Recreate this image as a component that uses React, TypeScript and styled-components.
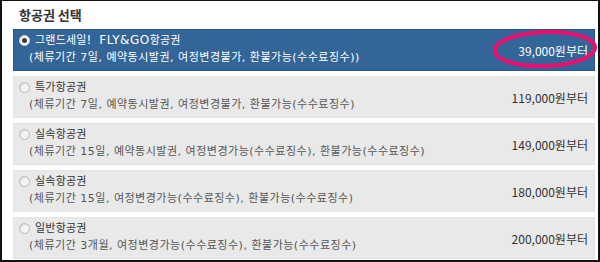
import styled, { createGlobalStyle } from 'styled-components';

const GlobalStyle = createGlobalStyle`
  html, body {
    margin: 0;
    padding: 0;
    background: #ffffff;
  }
  * {
    box-sizing: border-box;
  }
`;

type Ticket = {
  name: string;
  detail: string;
  price: string;
  selected?: boolean;
};

const tickets: Ticket[] = [
  {
    name: '그랜드세일! FLY&GO항공권',
    detail: '(체류기간 7일, 예약동시발권, 여정변경불가, 환불가능(수수료징수))',
    price: '39,000원부터',
    selected: true,
  },
  {
    name: '특가항공권',
    detail: '(체류기간 7일, 예약동시발권, 여정변경불가, 환불가능(수수료징수)',
    price: '119,000원부터',
  },
  {
    name: '실속항공권',
    detail: '(체류기간 15일, 예약동시발권, 여정변경가능(수수료징수), 환불가능(수수료징수)',
    price: '149,000원부터',
  },
  {
    name: '실속항공권',
    detail: '(체류기간 15일, 여정변경가능(수수료징수), 환불가능(수수료징수)',
    price: '180,000원부터',
  },
  {
    name: '일반항공권',
    detail: '(체류기간 3개월, 여정변경가능(수수료징수), 환불가능(수수료징수)',
    price: '200,000원부터',
  },
];

const Frame = styled.div`
  width: 600px;
  height: 262px;
  border: 2px solid #111111;
  border-top-width: 1px;
  padding: 0 3px 0 11px;
  overflow: hidden;
  font-family: 'DejaVu Sans', 'Noto Sans CJK KR', sans-serif;
  font-size: 11px;
  color: #333333;
`;

const Heading = styled.h2`
  margin: 0;
  height: 28px;
  line-height: 28px;
  padding-left: 6px;
  font-family: 'Noto Sans CJK KR', sans-serif;
  font-size: 13px;
  font-weight: 700;
  color: #333333;
`;

const List = styled.ul`
  margin: 0;
  padding: 0;
  list-style: none;
  display: flex;
  flex-direction: column;
  gap: 5px;
`;

const Row = styled.li<{ $selected?: boolean }>`
  position: relative;
  height: 42px;
  display: flex;
  align-items: flex-start;
  justify-content: space-between;
  padding: 2px 6px 0 5px;
  border: 1px solid ${(p) => (p.$selected ? '#28568a' : '#e4e4e4')};
  background: ${(p) => (p.$selected ? '#336598' : '#e9e9e9')};
  color: ${(p) => (p.$selected ? '#ffffff' : '#333333')};
`;

const Info = styled.div`
  display: flex;
  flex-direction: column;
  line-height: 17px;
`;

const NameLine = styled.div`
  display: flex;
  align-items: center;
  gap: 5px;
`;

const Radio = styled.span<{ $checked?: boolean }>`
  width: 11px;
  height: 11px;
  border-radius: 50%;
  border: 1px solid ${(p) => (p.$checked ? '#d0d0d0' : '#b9b9b9')};
  background: ${(p) => (p.$checked ? '#ffffff' : '#f4f4f4')};
  box-shadow: inset 1px 1px 1px ${(p) => (p.$checked ? '#e6e6e6' : '#dcdcdc')};
  display: flex;
  align-items: center;
  justify-content: center;
  flex-shrink: 0;
  &::after {
    content: '';
    width: 5px;
    height: 5px;
    border-radius: 50%;
    background: ${(p) => (p.$checked ? '#3a3a3a' : 'transparent')};
  }
`;

const Name = styled.span`
  font-size: 11px;
  letter-spacing: 0.2px;
`;

const Latin = styled.span`
  font-size: 12px;
  letter-spacing: 0.5px;
  word-spacing: 3px;
`;

const Detail = styled.div<{ $selected?: boolean }>`
  padding-left: 10px;
  font-size: 11px;
  letter-spacing: 0.5px;
  color: ${(p) => (p.$selected ? '#ffffff' : '#555555')};
  white-space: nowrap;
`;

const Price = styled.div`
  padding-top: 10px;
  font-family: 'Noto Sans CJK KR', sans-serif;
  font-size: 12px;
  white-space: nowrap;
`;

const Highlight = styled.svg`
  position: absolute;
  top: 0;
  right: -4px;
  width: 106px;
  height: 38px;
  pointer-events: none;
`;

// wider latin run inside a name, the way the source font draws it
function renderName(name: string) {
  return name
    .split(/([!A-Za-z& ]+)/)
    .filter(Boolean)
    .map((part, i) =>
      /[A-Za-z!&]/.test(part) ? <Latin key={i}>{part}</Latin> : <span key={i}>{part}</span>
    );
}

export default function App() {
  return (
    <>
      <GlobalStyle />
      <Frame>
        <Heading>항공권 선택</Heading>
        <List>
          {tickets.map((t, i) => (
            <Row key={i} $selected={t.selected}>
              <Info>
                <NameLine>
                  <Radio $checked={t.selected} />
                  <Name>{renderName(t.name)}</Name>
                </NameLine>
                <Detail $selected={t.selected}>{t.detail}</Detail>
              </Info>
              <Price>{t.price}</Price>
              {t.selected && (
                <Highlight viewBox="0 0 106 38">
                  <ellipse
                    cx="53"
                    cy="19"
                    rx="50"
                    ry="17"
                    fill="none"
                    stroke="#ea0f6e"
                    strokeWidth="4"
                    transform="rotate(-2 53 19)"
                  />
                </Highlight>
              )}
            </Row>
          ))}
        </List>
      </Frame>
    </>
  );
}
